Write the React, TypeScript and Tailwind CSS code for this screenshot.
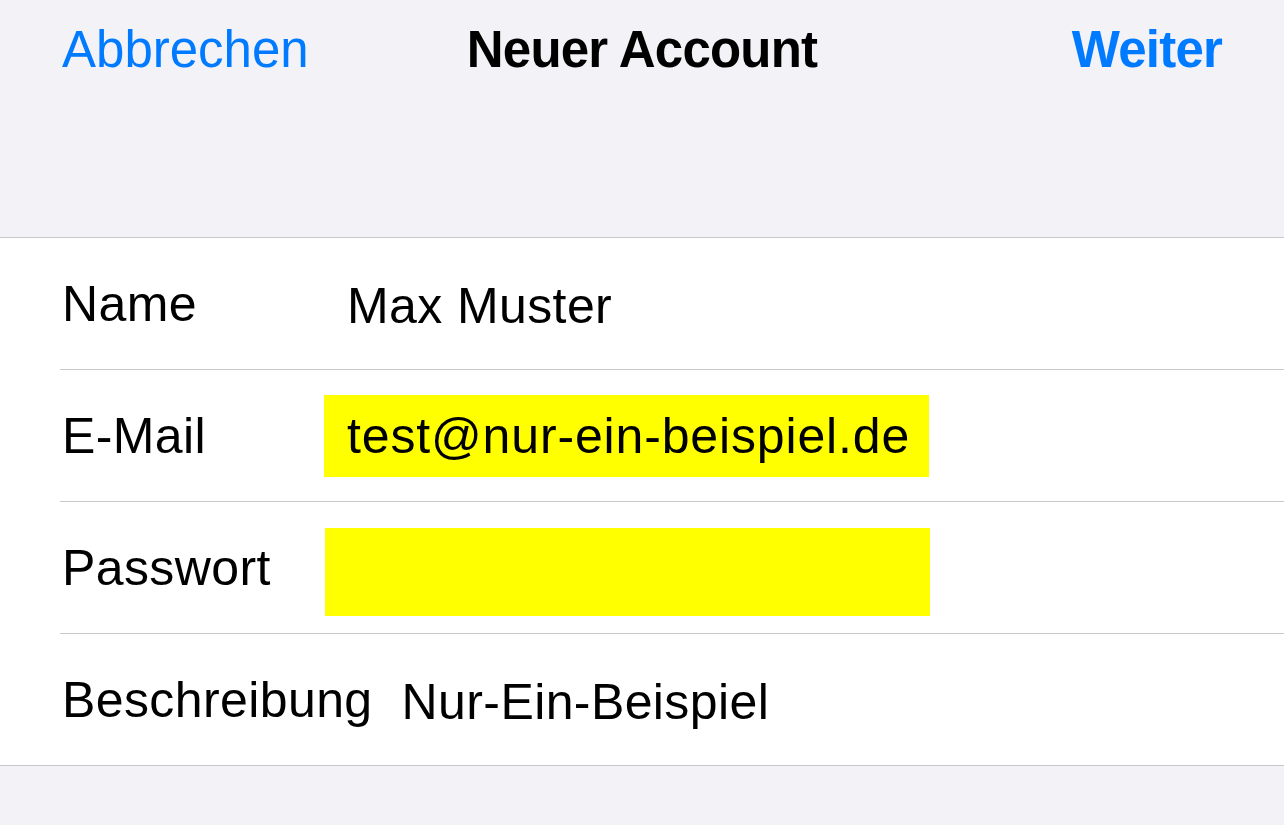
const fields = [
  { label: "Name", value: "Max Muster" },
  { label: "E-Mail", value: "test@nur-ein-beispiel.de", highlight: true },
  { label: "Passwort", value: "", blank: true },
  { label: "Beschreibung", value: "Nur-Ein-Beispiel" },
];

function Row({
  label,
  value,
  highlight,
  blank,
  last,
}: {
  label: string;
  value: string;
  highlight?: boolean;
  blank?: boolean;
  last?: boolean;
}) {
  return (
    <div
      className={
        last
          ? "ml-[60px] flex h-[131px] items-center gap-[29px] pl-[2px] pr-[60px]"
          : "ml-[60px] flex h-[132px] items-center gap-[29px] border-b border-[#c8c7cc] pl-[2px] pr-[60px]"
      }
    >
      <span className="min-w-[256px] text-[50px] leading-none tracking-[0.4px] text-black">{label}</span>

      {/* value — the yellow boxes are the highlight marks of the screenshot */}
      {highlight ? (
        <span className="-ml-[23px] flex h-[82px] w-[605px] items-center bg-[#ffff00] pl-[23px] text-[50px] leading-none tracking-[0.85px] text-black">
          {value}
        </span>
      ) : blank ? (
        <span className="-ml-[22px] mt-[8px] h-[88px] w-[605px] bg-[#ffff00]" />
      ) : (
        <span className="mt-[4px] text-[50px] leading-none tracking-[0.4px] text-black">{value}</span>
      )}
    </div>
  );
}

export default function App() {
  return (
    <div
      className="flex h-[825px] w-[1284px] flex-col overflow-hidden bg-[#f2f2f7]"
      style={{ fontFamily: '"Liberation Sans", Arial, sans-serif' }}
    >
      {/* ── Nav bar ── */}
      <header className="grid h-[237px] shrink-0 grid-cols-[1fr_auto_1fr] items-start px-[62px] pt-[24px]">
        <button className="justify-self-start text-[51px] leading-none text-[#007aff]">Abbrechen</button>
        <h1 className="text-[51px] font-bold leading-none tracking-[-0.8px] text-black">Neuer Account</h1>
        <button className="justify-self-end text-[51px] font-bold leading-none tracking-[-0.8px] text-[#007aff]">
          Weiter
        </button>
      </header>

      {/* ── Form group ── */}
      <section className="border-y border-[#c8c7cc] bg-white">
        {fields.map((f, i) => (
          <Row key={f.label} {...f} last={i === fields.length - 1} />
        ))}
      </section>
    </div>
  );
}
